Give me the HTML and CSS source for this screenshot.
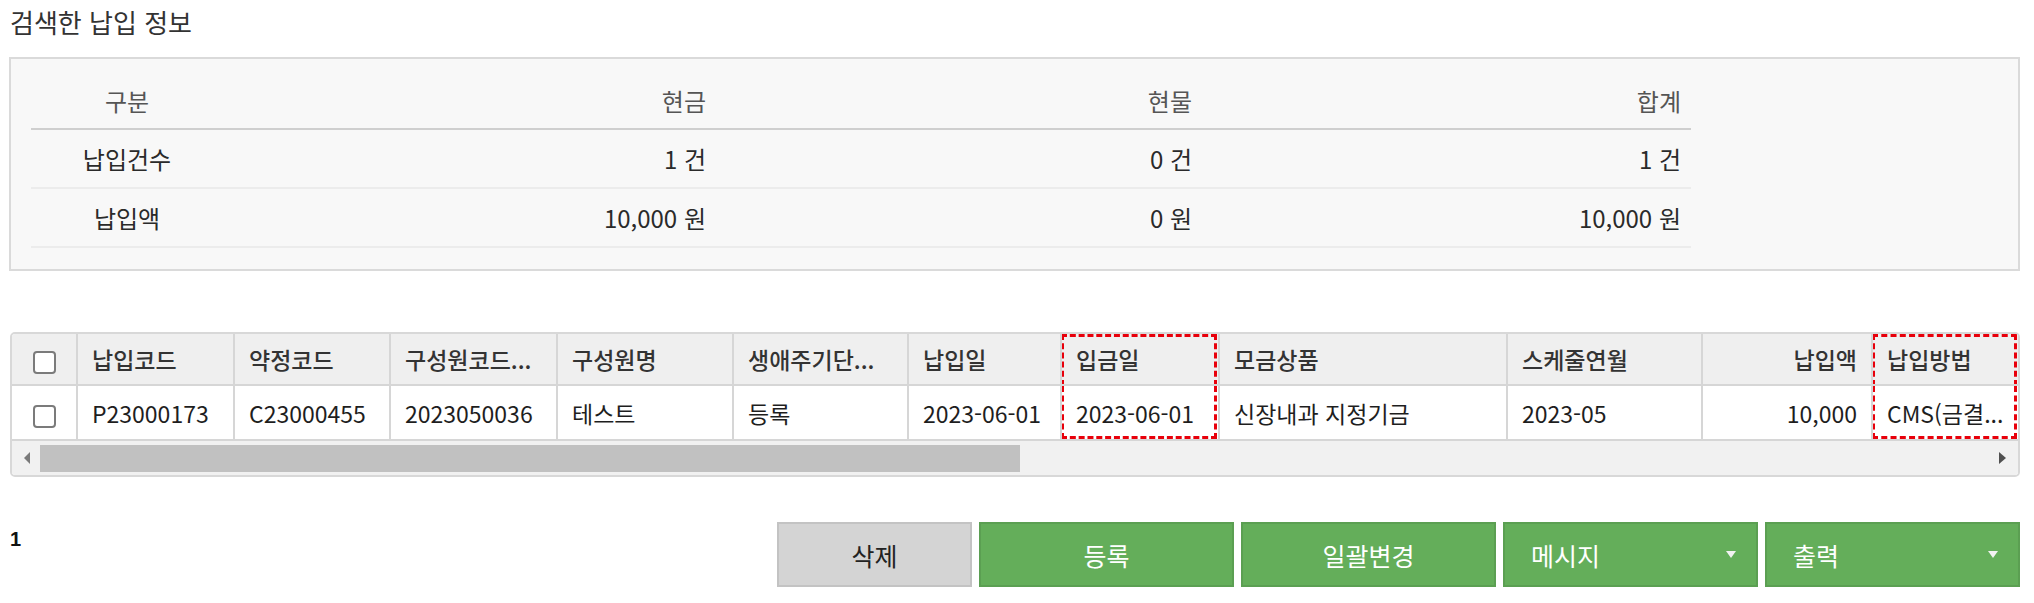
FILE: index.html
```html
<!DOCTYPE html>
<html lang="ko">
<head>
  <meta charset="UTF-8">
  <title>납입 정보</title>
  <link rel="stylesheet" href="styles.css">
</head>
<body>

  <h3 class="section-title">검색한 납입 정보</h3>

  <div class="summary-box">
    <table class="summary">
      <colgroup>
        <col style="width: 192px">
        <col style="width: 493px">
        <col style="width: 486px">
        <col style="width: 489px">
      </colgroup>
      <thead>
        <tr>
          <th class="center">구분</th>
          <th>현금</th>
          <th>현물</th>
          <th>합계</th>
        </tr>
      </thead>
      <tbody>
        <tr>
          <td class="center">납입건수</td>
          <td>1 건</td>
          <td>0 건</td>
          <td>1 건</td>
        </tr>
        <tr>
          <td class="center">납입액</td>
          <td>10,000 원</td>
          <td>0 원</td>
          <td>10,000 원</td>
        </tr>
      </tbody>
    </table>
  </div>

  <div class="grid">
    <table class="grid-table">
      <colgroup>
        <col style="width: 66px">
        <col style="width: 157px">
        <col style="width: 156px">
        <col style="width: 167px">
        <col style="width: 176px">
        <col style="width: 175px">
        <col style="width: 153px">
        <col style="width: 158px">
        <col style="width: 288px">
        <col style="width: 195px">
        <col style="width: 170px">
        <col style="width: 145px">
      </colgroup>
      <thead>
        <tr>
          <th class="check"><input type="checkbox"></th>
          <th>납입코드</th>
          <th>약정코드</th>
          <th>구성원코드...</th>
          <th>구성원명</th>
          <th>생애주기단...</th>
          <th>납입일</th>
          <th class="mark">입금일</th>
          <th>모금상품</th>
          <th>스케줄연월</th>
          <th class="num">납입액</th>
          <th class="mark">납입방법</th>
        </tr>
      </thead>
      <tbody>
        <tr>
          <td class="check"><input type="checkbox"></td>
          <td>P23000173</td>
          <td>C23000455</td>
          <td>2023050036</td>
          <td>테스트</td>
          <td>등록</td>
          <td>2023-06-01</td>
          <td class="mark">2023-06-01</td>
          <td>신장내과 지정기금</td>
          <td>2023-05</td>
          <td class="num">10,000</td>
          <td class="mark">CMS(금결...</td>
        </tr>
      </tbody>
    </table>
    <div class="hscroll">
      <span class="arrow left"></span>
      <div class="track"><div class="thumb"></div></div>
      <span class="arrow right"></span>
    </div>
  </div>

  <div class="bottom-bar">
    <span class="count">1</span>
    <div class="actions">
      <button class="btn gray">삭제</button>
      <button class="btn green">등록</button>
      <button class="btn green">일괄변경</button>
      <button class="btn green drop">메시지<span class="caret"></span></button>
      <button class="btn green drop">출력<span class="caret"></span></button>
    </div>
  </div>

</body>
</html>
```

FILE: styles.css
```css
body {
  margin: 0;
  padding: 7px 14px 0 9px;
  font-family: "Noto Sans CJK KR", "Noto Sans", sans-serif;
  font-size: 23px;
  color: #1e1e1e;
  background: #fff;
}

.section-title {
  margin: 0 0 20px 1px;
  font-size: 26px;
  font-weight: normal;
  line-height: 30px;
  color: #333;
}

/* summary */
.summary-box {
  background: #f8f8f8;
  border: 2px solid #dadada;
  padding: 14px 20px 21px;
}

.summary {
  border-collapse: collapse;
  table-layout: fixed;
  width: 1660px;
  font-size: 24px;
}

.summary th,
.summary td {
  text-align: right;
  padding: 0 10px;
  font-weight: normal;
}

.summary th {
  height: 55px;
  color: #555;
  border-bottom: 2px solid #cfcfcf;
}

.summary td {
  height: 57px;
  color: #2a2a2a;
  border-bottom: 2px solid #ececec;
}

.summary .center {
  text-align: center;
}

/* grid */
.grid {
  margin-top: 61px;
  margin-left: 1px;
  border: 2px solid #d8d8d8;
  border-radius: 5px;
  overflow: hidden;
}

.grid-table {
  border-collapse: separate;
  border-spacing: 0;
  table-layout: fixed;
  width: 2006px;
}

.grid-table th,
.grid-table td {
  box-sizing: border-box;
  padding: 0 14px;
  text-align: left;
  white-space: nowrap;
  overflow: hidden;
  border-right: 2px solid #d6d6d6;
  border-bottom: 2px solid #d6d6d6;
  position: relative;
}

.grid-table th:last-child,
.grid-table td:last-child {
  border-right: none;
}

.grid-table th {
  height: 52px;
  background: #efefef;
  color: #333;
  font-weight: 500;
}

.grid-table td {
  height: 55px;
  background: #fff;
  color: #1e1e1e;
}

.grid-table .num {
  text-align: right;
}

.grid-table .check {
  padding: 0;
  text-align: center;
}

.grid-table input[type="checkbox"] {
  appearance: none;
  width: 23px;
  height: 23px;
  margin: 0;
  vertical-align: middle;
  border: 2px solid #7b7b7b;
  border-radius: 4px;
  background: #fff;
}

.grid-table .mark::after {
  content: "";
  position: absolute;
  left: -1px;
  right: 1px;
  top: 0;
  bottom: -2px;
  border: 3px dashed #e8000b;
}

.grid-table th.mark::after {
  border-bottom: none;
}

.grid-table td.mark::after {
  border-top: none;
  bottom: 0;
}

.hscroll {
  display: flex;
  align-items: center;
  height: 34px;
  background: #f1f1f1;
}

.hscroll .arrow {
  width: 0;
  height: 0;
  border-top: 6px solid transparent;
  border-bottom: 6px solid transparent;
}

.hscroll .arrow.left {
  margin: 0 10px 0 12px;
  border-right: 6px solid #7a7a7a;
}

.hscroll .arrow.right {
  margin: 0 12px 0 8px;
  border-left: 7px solid #505050;
}

.hscroll .track {
  flex: 1;
  align-self: stretch;
  padding: 4px 0 3px;
}

.hscroll .thumb {
  width: 980px;
  height: 100%;
  background: #c1c1c1;
}

/* buttons */
.bottom-bar {
  display: flex;
  justify-content: space-between;
  align-items: flex-start;
  margin-top: 45px;
}

.count {
  margin: 5px 0 0 1px;
  font-family: "Liberation Sans", Arial, sans-serif;
  font-size: 20px;
  font-weight: bold;
  line-height: 24px;
  color: #111;
}

.actions {
  display: flex;
  gap: 7px;
}

.btn {
  width: 255px;
  height: 65px;
  font-family: "Noto Sans CJK KR", sans-serif;
  font-size: 25px;
  border-radius: 0;
  cursor: pointer;
}

.btn.gray {
  width: 195px;
  background: #d4d4d4;
  border: 2px solid #c3c3c3;
  color: #222;
}

.btn.green {
  background: #64ae5a;
  border: 2px solid #5b9f52;
  color: #fff;
}

.btn.drop {
  display: flex;
  align-items: center;
  justify-content: space-between;
  padding: 0 20px 0 26px;
}

.caret {
  width: 0;
  height: 0;
  border-left: 5px solid transparent;
  border-right: 5px solid transparent;
  border-top: 7px solid #f2f2f2;
}
```
